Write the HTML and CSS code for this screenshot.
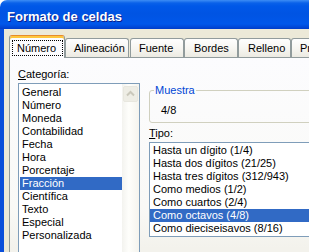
FILE: index.html
```html
<!DOCTYPE html>
<html lang="es">
<head>
<meta charset="utf-8">
<title>Formato de celdas</title>
<link rel="stylesheet" href="styles.css">
</head>
<body>
<div class="window">
  <div class="titlebar">Formato de celdas</div>
  <div class="frame">
    <div class="tabs">
      <div class="tab tab-active"><span class="focus">Número</span></div>
      <div class="tab tab-alineacion">Alineación</div>
      <div class="tab tab-fuente">Fuente</div>
      <div class="tab tab-bordes">Bordes</div>
      <div class="tab tab-relleno">Relleno</div>
      <div class="tab tab-proteccion">Proteger</div>
    </div>
    <div class="panel">
      <div class="col-left">
        <div class="label"><u>C</u>ategoría:</div>
        <div class="listbox cat">
          <ul class="items">
            <li class="item">General</li>
            <li class="item">Número</li>
            <li class="item">Moneda</li>
            <li class="item">Contabilidad</li>
            <li class="item">Fecha</li>
            <li class="item">Hora</li>
            <li class="item">Porcentaje</li>
            <li class="item sel">Fracción</li>
            <li class="item">Científica</li>
            <li class="item">Texto</li>
            <li class="item">Especial</li>
            <li class="item">Personalizada</li>
          </ul>
          <div class="scrollbar">
            <div class="sb-up">
              <svg width="15" height="16" viewBox="0 0 15 16"><polyline points="4,9.5 7.5,6 11,9.5" fill="none" stroke="#CAC8BB" stroke-width="2"/></svg>
            </div>
          </div>
        </div>
      </div>
      <div class="col-right">
        <fieldset class="sample">
          <legend>Muestra</legend>
          <div class="sample-value">4/8</div>
        </fieldset>
        <div class="label"><u>T</u>ipo:</div>
        <ul class="listbox tipo">
          <li class="item">Hasta un dígito (1/4)</li>
          <li class="item">Hasta dos dígitos (21/25)</li>
          <li class="item">Hasta tres dígitos (312/943)</li>
          <li class="item">Como medios (1/2)</li>
          <li class="item">Como cuartos (2/4)</li>
          <li class="item sel">Como octavos (4/8)</li>
          <li class="item">Como dieciseisavos (8/16)</li>
        </ul>
      </div>
    </div>
  </div>
</div>
</body>
</html>
```

FILE: styles.css
```css
html, body {
  margin: 0;
  padding: 0;
  width: 309px;
  height: 252px;
  overflow: hidden;
  background: #ffffff;
  font-family: "Liberation Sans", Arial, sans-serif;
  font-size: 11px;
  color: #000;
}

.window {
  width: 420px;
}

.titlebar {
  height: 29px;
  box-sizing: border-box;
  padding: 4px 0 0 7px;
  line-height: 25px;
  font-size: 13px;
  font-weight: bold;
  color: #ffffff;
  text-shadow: 1px 1px 0 #0A1E8C;
  border-top-left-radius: 7px;
  background: linear-gradient(to bottom,
    #3D8DF5 0px, #0A61E9 3px, #0058E8 6px, #0054E3 14px,
    #0057EA 24px, #0048D8 27px, #003CC8 29px);
  white-space: nowrap;
}

.frame {
  border-left: 4px solid #0A4FDA;
  background: #ECE9D8;
  padding: 6px 0 0 5px;
  height: 240px;
}

.tabs {
  display: flex;
  align-items: flex-end;
  height: 22px;
}

.tab {
  height: 19px;
  box-sizing: border-box;
  border: 1px solid #919B9C;
  border-bottom: 0;
  border-radius: 3px 3px 0 0;
  background: linear-gradient(to bottom, #FEFEFE, #F6F5F0 55%, #ECEAE2);
  padding: 3px 0 0 8px;
  line-height: 13px;
  white-space: nowrap;
  overflow: hidden;
}

.tab-active {
  position: relative;
  z-index: 1;
  width: 56px;
  height: 23px;
  margin-bottom: -1px;
  border-top: 1px solid #E68B2C;
  box-shadow: inset 0 2px 0 #FFC73C;
  background: #FCFCFE;
  padding: 4px 0 0 2px;
}

.focus {
  display: block;
  width: 51px;
  height: 16px;
  box-sizing: border-box;
  border: 1px dotted #000;
  line-height: 14px;
  padding-left: 4px;
}

.tab-alineacion { width: 64px; }
.tab-fuente { width: 54px; margin-left: 1px; }
.tab-bordes { width: 54px; padding-left: 9px; }
.tab-relleno { width: 53px; padding-left: 9px; }
.tab-proteccion { width: 70px; }

.panel {
  display: flex;
  border: 1px solid #919B9C;
  background: linear-gradient(to bottom, #FCFCFE 0px, #F9F9F6 150px, #F3F2EC 190px);
  padding: 10px 0 0 8px;
  height: 200px;
}

.col-left {
  width: 122px;
  flex: none;
}

.label {
  line-height: 13px;
  height: 13px;
  margin-bottom: 2px;
}

.listbox {
  border: 1px solid #7F9DB9;
  background: #ffffff;
}

.cat {
  display: flex;
  height: 200px;
}

.items {
  list-style: none;
  margin: 0;
  padding: 2px 0 0 1px;
  width: 102px;
}

.item {
  line-height: 13px;
  height: 13px;
  padding-left: 2px;
  white-space: nowrap;
}

.sel {
  background: #316AC5;
  color: #ffffff;
}

.scrollbar {
  width: 17px;
  box-sizing: border-box;
  padding: 2px 1px 0 1px;
  background: linear-gradient(to right, #F3F3EF, #FEFEFB 40%, #F5F4EE);
}

.sb-up {
  width: 15px;
  height: 16px;
  box-sizing: border-box;
  border: 1px solid #E8E7DF;
  border-radius: 2px;
  background: #EEEDE5;
}

.sb-up svg {
  display: block;
  margin: -1px;
}

.col-right {
  flex: 1;
  margin-left: 9px;
}

.sample {
  margin: 16px 0 0 0;
  padding: 0 0 5px 4px;
  border: 1px solid #D0D0BF;
  border-radius: 3px;
  min-width: 0;
}

.sample legend {
  padding: 0 1px;
  line-height: 13px;
  color: #0046D5;
}

.sample-value {
  margin: 7px 0 0 7px;
  line-height: 13px;
}

.sample + .label {
  margin-top: 4px;
}

.tipo {
  list-style: none;
  margin: 0;
  padding: 1px 0;
}

.tipo .item {
  padding-left: 3px;
}
```
